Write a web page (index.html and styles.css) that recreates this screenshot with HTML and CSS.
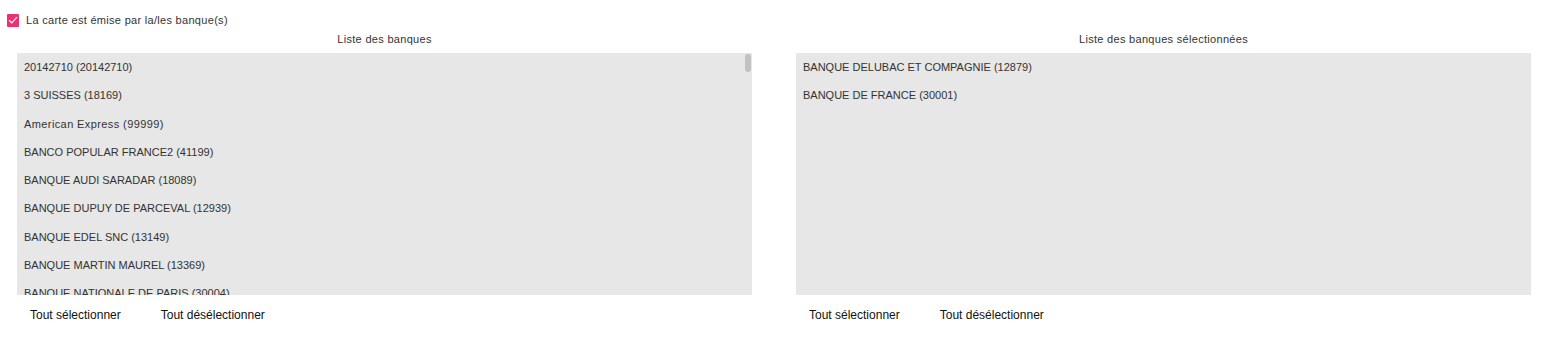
FILE: index.html
```html
<!DOCTYPE html>
<html lang="fr">
<head>
    <meta charset="UTF-8">
    <meta name="viewport" content="width=device-width, initial-scale=1.0">
    <title>Banques émettrices</title>
    <link rel="stylesheet" href="styles.css">
</head>
<body>
    <div class="issuer">
        <label class="check">
            <span class="box">
                <svg width="10" height="8" viewBox="0 0 10 8"><path d="M1 4.2 L3.8 6.8 L9 1.2" fill="none" stroke="#fff" stroke-width="1.2"/></svg>
            </span>
            La carte est émise par la/les banque(s)
        </label>

        <div class="columns">
            <div class="column">
                <div class="title">Liste des banques</div>
                <div class="list-wrap">
                    <ul class="list">
                        <li>20142710 (20142710)</li>
                        <li>3 SUISSES (18169)</li>
                        <li class="mixed">American Express (99999)</li>
                        <li>BANCO POPULAR FRANCE2 (41199)</li>
                        <li>BANQUE AUDI SARADAR (18089)</li>
                        <li>BANQUE DUPUY DE PARCEVAL (12939)</li>
                        <li>BANQUE EDEL SNC (13149)</li>
                        <li>BANQUE MARTIN MAUREL (13369)</li>
                        <li>BANQUE NATIONALE DE PARIS (30004)</li>
                    </ul>
                    <div class="thumb"></div>
                </div>
                <div class="actions">
                    <button class="link">Tout sélectionner</button>
                    <button class="link">Tout désélectionner</button>
                </div>
            </div>

            <div class="column">
                <div class="title">Liste des banques sélectionnées</div>
                <div class="list-wrap">
                    <ul class="list">
                        <li>BANQUE DELUBAC ET COMPAGNIE (12879)</li>
                        <li>BANQUE DE FRANCE (30001)</li>
                    </ul>
                </div>
                <div class="actions">
                    <button class="link">Tout sélectionner</button>
                    <button class="link">Tout désélectionner</button>
                </div>
            </div>
        </div>
    </div>
</body>
</html>
```

FILE: styles.css
```css
body {
    margin: 0;
    font-family: "Liberation Sans", Arial, sans-serif;
    font-size: 11px;
    color: #333;
    background: #fff;
}
.issuer {
    padding: 13px 14px 0 7px;
}
.check {
    display: flex;
    align-items: center;
    gap: 7px;
    height: 14px;
    color: #333;
    letter-spacing: 0.3px;
}
.box {
    width: 12px;
    height: 13px;
    background: #f0306e;
    border-radius: 1px;
    display: flex;
    align-items: center;
    justify-content: center;
}
.columns {
    display: grid;
    grid-template-columns: 1fr 1fr;
    gap: 44px;
    padding-left: 10px;
    margin-top: 5px;
}
.title {
    text-align: center;
    height: 14px;
    line-height: 14px;
    margin-bottom: 7px;
    letter-spacing: 0.3px;
}
.list-wrap {
    position: relative;
    height: 242px;
    background: #e6e7e6;
    overflow: hidden;
}
.list {
    list-style: none;
    margin: 0;
    padding: 0;
}
.list li {
    height: 28.25px;
    line-height: 28.25px;
    padding-left: 7px;
    white-space: nowrap;
}
.list li.mixed {
    letter-spacing: 0.4px;
}
.thumb {
    position: absolute;
    top: 1px;
    right: 1px;
    width: 6px;
    height: 18px;
    border-radius: 3px;
    background: #c1c1c1;
}
.actions {
    display: flex;
    gap: 14px;
    margin-top: 11px;
}
.link {
    font-family: inherit;
    font-size: 12px;
    color: #111;
    background: none;
    border: none;
    padding: 2px 13px;
    cursor: pointer;
}
```
